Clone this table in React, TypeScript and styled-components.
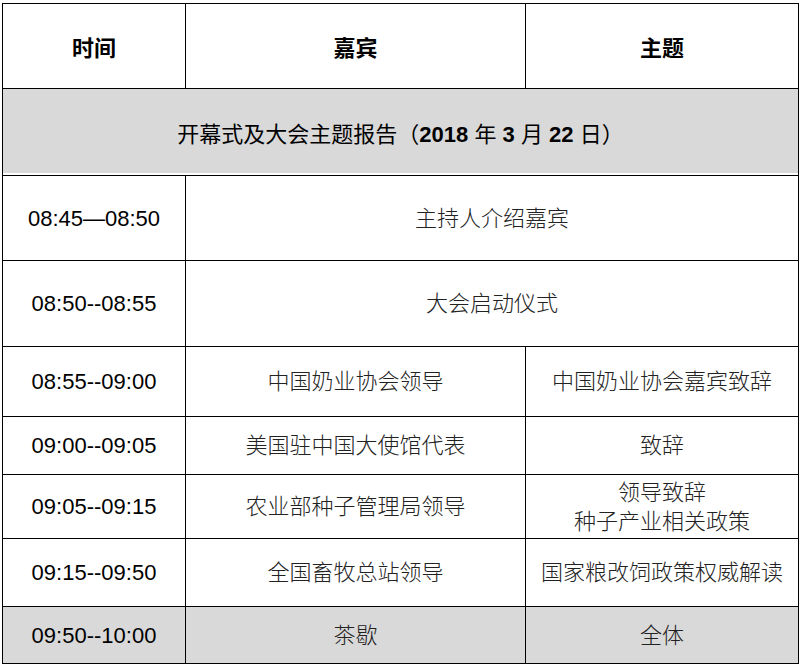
import React from 'react'
import styled, { createGlobalStyle } from 'styled-components'

const GlobalStyle = createGlobalStyle`
  html, body {
    margin: 0;
    padding: 0;
    background: #fff;
  }
`

const Page = styled.div`
  width: 800px;
  height: 665px;
  padding: 3px 0 0 2px;
  box-sizing: border-box;
  overflow: hidden;
`

const Table = styled.table`
  width: 796px;
  border-collapse: collapse;
  table-layout: fixed;
  font-family: "Liberation Sans", "Noto Sans CJK SC", sans-serif;
  font-size: 22px;
  color: #000;
`

const Col = styled.col<{ $w: number }>`
  width: ${p => p.$w}px;
`

const Row = styled.tr<{ $h: number; $shaded?: boolean }>`
  height: ${p => p.$h}px;
  background: ${p => (p.$shaded ? '#d9d9d9' : '#fff')};
`

const Head = styled.th`
  border: 1px solid #000;
  font-weight: 700;
  text-align: center;
  vertical-align: middle;
  padding: 0;
`

const Cell = styled.td<{ $light?: boolean }>`
  border: 1px solid #000;
  text-align: center;
  vertical-align: middle;
  padding: 0;
  line-height: 29px;
  font-weight: ${p => (p.$light ? 300 : 400)};
  color: ${p => (p.$light ? '#222' : '#000')};
`

const TitleCell = styled.td`
  border: 1px solid #000;
  text-align: center;
  vertical-align: middle;
  padding: 0;
  box-shadow: inset 0 -2px 0 #fff;
`

const Num = styled.span`
  font-weight: 700;
`

type Item = { time: string; guest: string; topic?: string; h: number; shaded?: boolean }

const items: Item[] = [
  { time: '08:45—08:50', guest: '主持人介绍嘉宾', h: 85 },
  { time: '08:50--08:55', guest: '大会启动仪式', h: 86 },
  { time: '08:55--09:00', guest: '中国奶业协会领导', topic: '中国奶业协会嘉宾致辞', h: 70 },
  { time: '09:00--09:05', guest: '美国驻中国大使馆代表', topic: '致辞', h: 58 },
  { time: '09:05--09:15', guest: '农业部种子管理局领导', topic: '领导致辞\n种子产业相关政策', h: 64 },
  { time: '09:15--09:50', guest: '全国畜牧总站领导', topic: '国家粮改饲政策权威解读', h: 68 },
  { time: '09:50--10:00', guest: '茶歇', topic: '全体', h: 57, shaded: true },
]

function lines(text: string) {
  return text.split('\n').map((t, i) => (
    <React.Fragment key={i}>
      {i > 0 && <br />}
      {t}
    </React.Fragment>
  ))
}

export default function App() {
  return (
    <>
      <GlobalStyle />
      <Page>
        <Table>
          <colgroup>
            <Col $w={183} />
            <Col $w={340} />
            <Col $w={273} />
          </colgroup>
          <tbody>
            <Row $h={85}>
              <Head>时间</Head>
              <Head>嘉宾</Head>
              <Head>主题</Head>
            </Row>
            <Row $h={87} $shaded>
              <TitleCell colSpan={3}>
                开幕式及大会主题报告（<Num>2018</Num> 年 <Num>3</Num> 月 <Num>22</Num> 日）
              </TitleCell>
            </Row>
            {items.map(it => (
              <Row key={it.time} $h={it.h} $shaded={it.shaded}>
                <Cell>{it.time}</Cell>
                {it.topic ? (
                  <>
                    <Cell $light>{it.guest}</Cell>
                    <Cell $light>{lines(it.topic)}</Cell>
                  </>
                ) : (
                  <Cell $light colSpan={2}>{it.guest}</Cell>
                )}
              </Row>
            ))}
          </tbody>
        </Table>
      </Page>
    </>
  )
}
